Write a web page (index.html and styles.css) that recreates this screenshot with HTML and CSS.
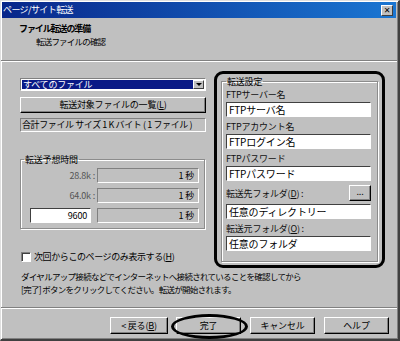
FILE: index.html
```html
<!DOCTYPE html>
<html lang="ja">
<head>
    <meta charset="UTF-8">
    <title>ページ/サイト転送</title>
    <link rel="stylesheet" href="styles.css">
</head>
<body>
<div class="window">
    <div class="titlebar">
        <span class="title">ページ/サイト転送</span>
        <span class="close">&#x2715;</span>
    </div>

    <div class="header">
        <div class="h-title">ファイル転送の準備</div>
        <div class="h-sub">転送ファイルの確認</div>
    </div>
    <div class="rule"></div>

    <div class="main">
        <div class="left">
            <div class="combo">
                <span class="combo-text">すべてのファイル</span>
                <span class="combo-arrow"></span>
            </div>
            <div class="btn wide">転送対象ファイルの一覧(<u>L</u>)</div>
            <div class="status">合計ファイル サイズ 1 K バイト ( 1 ファイル )</div>

            <fieldset class="group times">
                <legend>転送予想時間</legend>
                <div class="trow">
                    <span class="tlabel">28.8k :</span>
                    <span class="tfield">1 秒</span>
                </div>
                <div class="trow">
                    <span class="tlabel">64.0k :</span>
                    <span class="tfield">1 秒</span>
                </div>
                <div class="trow">
                    <span class="tlabel"><span class="tinput">9600</span></span>
                    <span class="tfield">1 秒</span>
                </div>
            </fieldset>

            <div class="check">
                <span class="box"></span>
                <span>次回からこのページのみ表示する(<u>H</u>)</span>
            </div>
        </div>

        <div class="right">
            <fieldset class="group settings">
                <legend>転送設定</legend>
                <div class="flabel">FTPサーバー名</div>
                <div class="field">FTPサーバ名</div>
                <div class="flabel">FTPアカウント名</div>
                <div class="field">FTPログイン名</div>
                <div class="flabel">FTPパスワード</div>
                <div class="field">FTPパスワード</div>
                <div class="flabel with-btn">
                    <span>転送先フォルダ(<u>D</u>) :</span>
                    <span class="btn dots">...</span>
                </div>
                <div class="field">任意のディレクトリー</div>
                <div class="flabel">転送元フォルダ(<u>O</u>) :</div>
                <div class="field">任意のフォルダ</div>
            </fieldset>
        </div>
    </div>

    <p class="note">ダイヤルアップ接続などでインターネットへ接続されていることを確認してから<br>[完了] ボタンをクリックしてください。転送が開始されます。</p>
    <div class="rule"></div>

    <div class="buttons">
        <div class="btn back">&lt; 戻る(<u>B</u>)</div>
        <div class="btn finish">完了<span class="ring"></span></div>
        <div class="btn">キャンセル</div>
        <div class="btn">ヘルプ</div>
    </div>
</div>
</body>
</html>
```

FILE: styles.css
```css
* {
    box-sizing: border-box;
}
body {
    margin: 0;
    background: #c0c0c0;
    font-family: "Noto Sans CJK JP", "Liberation Sans", sans-serif;
    font-size: 9px;
    letter-spacing: -0.2px;
    color: #000;
}
u {
    text-decoration: underline;
}
.window {
    width: 400px;
    height: 341px;
    display: flex;
    flex-direction: column;
    background: #c0c0c0;
    border-top: 1px solid #dfdfdf;
    border-left: 1px solid #dfdfdf;
    border-right: 2px solid #404040;
    border-bottom: 2px solid #404040;
    box-shadow: inset 1px 1px 0 #fff, inset -1px -1px 0 #808080;
}

/* title bar */
.titlebar {
    height: 16px;
    margin: 1px 2px 0 1px;
    display: flex;
    align-items: center;
    justify-content: space-between;
    background: linear-gradient(90deg, #08268a, #1a76d2);
    color: #fff;
    padding: 0 3px 0 1px;
}
.title {
    font-size: 9px;
    letter-spacing: -0.6px;
    line-height: 16px;
}
.close {
    width: 12px;
    height: 11px;
    background: #c0c0c0;
    color: #000;
    font-size: 8px;
    font-weight: bold;
    line-height: 10px;
    text-align: center;
    border: 1px solid;
    border-color: #fff #404040 #404040 #fff;
    font-family: "DejaVu Sans", sans-serif;
    letter-spacing: 0;
}

/* header */
.header {
    height: 42px;
    padding: 4px 0 0 18px;
}
.h-title {
    font-weight: bold;
    line-height: 13px;
    letter-spacing: -1.1px;
}
.h-sub {
    padding-left: 17px;
    font-size: 8.5px;
    line-height: 12.5px;
    letter-spacing: -0.8px;
}
.rule {
    height: 2px;
    border-top: 1px solid #808080;
    border-bottom: 1px solid #fff;
    margin-right: 1px;
}

/* main area */
.main {
    height: 206px;
    display: flex;
    padding: 9px 0 0 19px;
    gap: 8px;
}
.left {
    width: 186px;
    padding-top: 7px;
    display: flex;
    flex-direction: column;
}
.combo {
    height: 13px;
    display: flex;
    border: 1px solid;
    border-color: #808080 #fff #fff #808080;
    background: #fff;
    padding: 1px;
}
.combo-text {
    flex: 1;
    background: #0a1a86;
    color: #fff;
    line-height: 9px;
    padding-left: 1px;
}
.combo-arrow {
    width: 11px;
    background: #c0c0c0;
    border: 1px solid;
    border-color: #fff #404040 #404040 #fff;
    display: flex;
    align-items: center;
    justify-content: center;
}
.combo-arrow::before {
    content: "";
    border-left: 3px solid transparent;
    border-right: 3px solid transparent;
    border-top: 3px solid #000;
}
.btn {
    background: #c0c0c0;
    border: 1px solid;
    border-color: #fff #000 #000 #fff;
    box-shadow: inset -1px -1px 0 #808080;
    text-align: center;
    line-height: 14px;
}
.wide {
    height: 16px;
    margin-top: 6px;
}
.status {
    height: 14px;
    margin-top: 5px;
    border: 1px solid;
    border-color: #808080 #fff #fff #808080;
    line-height: 12px;
    padding-left: 1px;
    letter-spacing: -0.4px;
}

/* group boxes */
.group {
    margin: 0;
    border: 1px solid #8c8c8c;
    box-shadow: 1px 1px 0 #fff, inset 1px 1px 0 #fff;
    padding: 0;
}
.group legend {
    padding: 0 1px;
    margin-left: 0;
    line-height: 11px;
}
.times {
    margin-top: 22px;
    padding: 3px 5px 5px 8px;
    width: 184px;
    display: flex;
    flex-direction: column;
    gap: 5px;
}
.times legend {
    margin-left: -5px;
}
.trow {
    display: flex;
    height: 15px;
}
.tlabel {
    width: 67px;
    text-align: right;
    color: #555;
    line-height: 15px;
    padding-right: 1px;
}
.tinput {
    display: block;
    width: 61px;
    height: 15px;
    margin-left: 1px;
    background: #fff;
    color: #000;
    border: 1px solid;
    border-color: #404040 #fff #fff #404040;
    padding-right: 3px;
    line-height: 13px;
}
.tfield {
    width: 102px;
    margin-left: 1px;
    border: 1px solid;
    border-color: #808080 #fff #fff #808080;
    text-align: right;
    padding-right: 4px;
    line-height: 13px;
}
.check {
    margin-top: 21px;
    display: flex;
    align-items: center;
    gap: 3px;
    padding-left: 1px;
    line-height: 13px;
    letter-spacing: -0.4px;
}
.box {
    width: 10px;
    height: 10px;
    background: #fff;
    border: 1px solid;
    border-color: #808080 #fff #fff #808080;
    box-shadow: inset 1px 1px 0 #404040;
}

/* right box */
.right {
    width: 171px;
    height: 197px;
    border: 3px solid #000;
    border-radius: 9px;
    padding: 2px 4px 3px 4px;
}
.settings {
    height: 100%;
    padding: 0 6px 0 4px;
}
.flabel {
    height: 15px;
    line-height: 15px;
    color: #111;
}
.with-btn {
    height: 20px;
    display: flex;
    align-items: center;
    justify-content: space-between;
    margin-bottom: 1px;
}
.dots {
    width: 22px;
    height: 16px;
    line-height: 12px;
}
.field {
    height: 15px;
    background: #fff;
    border: 1px solid;
    border-color: #404040 #fff #fff #404040;
    line-height: 13px;
    padding-left: 2px;
    font-size: 10px;
    margin-bottom: 2px;
}

/* footer */
.note {
    margin: 2px 0 12px 20px;
    font-size: 8.5px;
    line-height: 12.5px;
    letter-spacing: -0.7px;
}
.buttons {
    display: flex;
    justify-content: flex-end;
    gap: 9px;
    padding: 8px 9px 0 0;
}
.buttons .btn {
    width: 65px;
    height: 17px;
    line-height: 15px;
}
.buttons .back {
    width: 58px;
    margin-right: -1px;
}
.finish {
    position: relative;
}
.ring {
    position: absolute;
    left: -6px;
    right: -8px;
    top: -4px;
    bottom: -6px;
    border: 3px solid #000;
    border-radius: 50%;
}
```
